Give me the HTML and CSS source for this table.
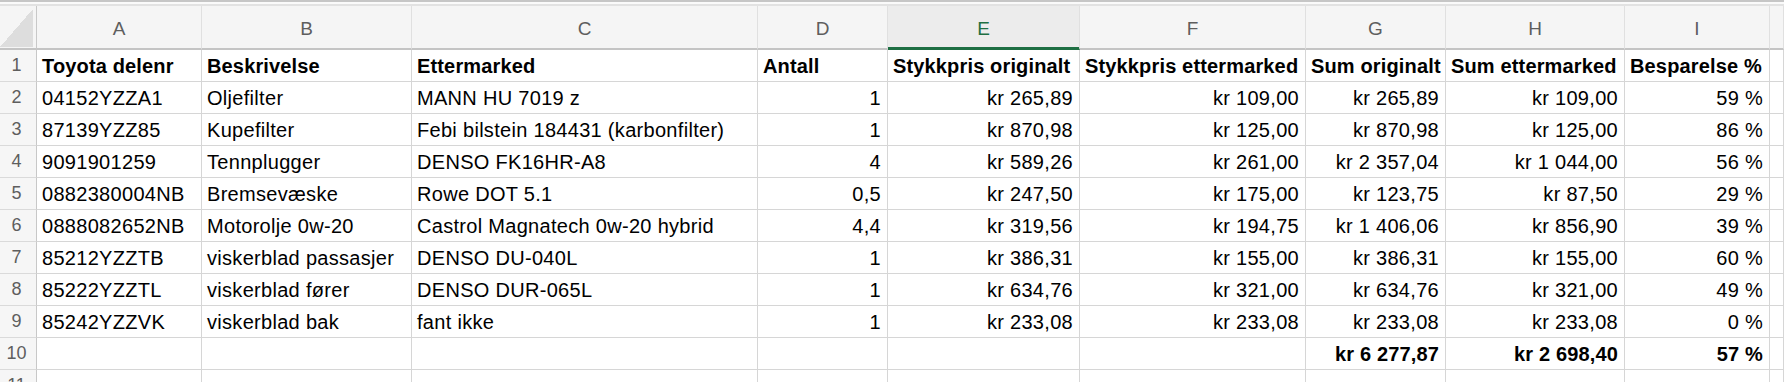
FILE: index.html
```html
<!DOCTYPE html>
<html lang="no">
<head>
<meta charset="utf-8">
<title>Regneark</title>
<link rel="stylesheet" href="styles.css">
</head>
<body>
<div class="topbar"></div>
<div class="sheet">
  <div class="row colhead">
    <div class="corner"><div class="tri"></div></div>
    <div class="ch">A</div><div class="ch">B</div><div class="ch">C</div><div class="ch">D</div>
    <div class="ch sel">E</div><div class="ch">F</div><div class="ch">G</div><div class="ch">H</div>
    <div class="ch">I</div><div class="ch"></div>
  </div>
  <div class="row">
    <div class="rn">1</div>
    <div class="c b">Toyota delenr</div><div class="c b">Beskrivelse</div><div class="c b">Ettermarked</div><div class="c b">Antall</div>
    <div class="c b">Stykkpris originalt</div><div class="c b">Stykkpris ettermarked</div><div class="c b">Sum originalt</div><div class="c b">Sum ettermarked</div><div class="c b">Besparelse %</div><div class="c"></div>
  </div>
  <div class="row">
    <div class="rn">2</div>
    <div class="c">04152YZZA1</div><div class="c">Oljefilter</div><div class="c">MANN HU 7019 z</div><div class="c r">1</div>
    <div class="c r">kr 265,89</div><div class="c r">kr 109,00</div><div class="c r">kr 265,89</div><div class="c r">kr 109,00</div><div class="c r">59 %</div><div class="c"></div>
  </div>
  <div class="row">
    <div class="rn">3</div>
    <div class="c">87139YZZ85</div><div class="c">Kupefilter</div><div class="c">Febi bilstein 184431 (karbonfilter)</div><div class="c r">1</div>
    <div class="c r">kr 870,98</div><div class="c r">kr 125,00</div><div class="c r">kr 870,98</div><div class="c r">kr 125,00</div><div class="c r">86 %</div><div class="c"></div>
  </div>
  <div class="row">
    <div class="rn">4</div>
    <div class="c">9091901259</div><div class="c">Tennplugger</div><div class="c">DENSO FK16HR-A8</div><div class="c r">4</div>
    <div class="c r">kr 589,26</div><div class="c r">kr 261,00</div><div class="c r">kr 2&nbsp;357,04</div><div class="c r">kr 1&nbsp;044,00</div><div class="c r">56 %</div><div class="c"></div>
  </div>
  <div class="row">
    <div class="rn">5</div>
    <div class="c">0882380004NB</div><div class="c">Bremsevæske</div><div class="c">Rowe DOT 5.1</div><div class="c r">0,5</div>
    <div class="c r">kr 247,50</div><div class="c r">kr 175,00</div><div class="c r">kr 123,75</div><div class="c r">kr 87,50</div><div class="c r">29 %</div><div class="c"></div>
  </div>
  <div class="row">
    <div class="rn">6</div>
    <div class="c">0888082652NB</div><div class="c">Motorolje 0w-20</div><div class="c">Castrol Magnatech 0w-20 hybrid</div><div class="c r">4,4</div>
    <div class="c r">kr 319,56</div><div class="c r">kr 194,75</div><div class="c r">kr 1&nbsp;406,06</div><div class="c r">kr 856,90</div><div class="c r">39 %</div><div class="c"></div>
  </div>
  <div class="row">
    <div class="rn">7</div>
    <div class="c">85212YZZTB</div><div class="c">viskerblad passasjer</div><div class="c">DENSO DU-040L</div><div class="c r">1</div>
    <div class="c r">kr 386,31</div><div class="c r">kr 155,00</div><div class="c r">kr 386,31</div><div class="c r">kr 155,00</div><div class="c r">60 %</div><div class="c"></div>
  </div>
  <div class="row">
    <div class="rn">8</div>
    <div class="c">85222YZZTL</div><div class="c">viskerblad fører</div><div class="c">DENSO DUR-065L</div><div class="c r">1</div>
    <div class="c r">kr 634,76</div><div class="c r">kr 321,00</div><div class="c r">kr 634,76</div><div class="c r">kr 321,00</div><div class="c r">49 %</div><div class="c"></div>
  </div>
  <div class="row">
    <div class="rn">9</div>
    <div class="c">85242YZZVK</div><div class="c">viskerblad bak</div><div class="c">fant ikke</div><div class="c r">1</div>
    <div class="c r">kr 233,08</div><div class="c r">kr 233,08</div><div class="c r">kr 233,08</div><div class="c r">kr 233,08</div><div class="c r">0 %</div><div class="c"></div>
  </div>
  <div class="row">
    <div class="rn">10</div>
    <div class="c"></div><div class="c"></div><div class="c"></div><div class="c"></div>
    <div class="c"></div><div class="c"></div><div class="c r b">kr 6&nbsp;277,87</div><div class="c r b">kr 2&nbsp;698,40</div><div class="c r b">57 %</div><div class="c"></div>
  </div>
  <div class="row">
    <div class="rn">11</div>
    <div class="c"></div><div class="c"></div><div class="c"></div><div class="c"></div>
    <div class="c"></div><div class="c"></div><div class="c"></div><div class="c"></div><div class="c"></div><div class="c"></div>
  </div>
</div>
</body>
</html>
```
FILE: styles.css
```css
html, body {
  margin: 0;
  padding: 0;
  background: #ffffff;
  overflow: hidden;
}
body {
  font-family: "Liberation Sans", Arial, sans-serif;
  color: #000;
}
.topbar {
  height: 2px;
  border-top: 2px solid #c6c6c6;
  border-bottom: 2px solid #e2e2e2;
  background: #fafafa;
}
.row {
  display: grid;
  grid-template-columns: 37px 165px 210px 346px 130px 192px 226px 140px 179px 145px 1fr;
  height: 32px;
}
.colhead {
  height: 44px;
  background: #f5f5f5;
}
.corner {
  box-sizing: border-box;
  border-right: 1px solid #c8c8c8;
  border-bottom: 2px solid #c4c4c4;
  display: flex;
  align-items: flex-end;
  padding-bottom: 1px;
}
.tri {
  width: 33px;
  height: 38px;
  background: linear-gradient(to bottom right, transparent 50%, #dddddd 50%);
}
.ch {
  box-sizing: border-box;
  border-right: 1px solid #e0e0e0;
  border-bottom: 2px solid #c4c4c4;
  text-align: center;
  font-size: 19px;
  line-height: 22px;
  padding-top: 12px;
  color: #5e5e5e;
}
.ch.sel {
  color: #1e6f43;
  background: #ececec;
  border-bottom-color: #1e6f43;
  box-shadow: inset 0 -1px 0 #1e6f43;
}
.rn {
  box-sizing: border-box;
  background: #f6f6f6;
  border-right: 1px solid #c8c8c8;
  border-bottom: 1px solid #dadada;
  text-align: center;
  font-size: 18px;
  line-height: 23px;
  padding: 4px 3px 0 0;
  color: #5e5e5e;
}
.c {
  box-sizing: border-box;
  border-right: 1px solid #d6d6d6;
  border-bottom: 1px solid #d6d6d6;
  font-size: 20px;
  line-height: 23px;
  letter-spacing: 0.3px;
  padding: 5px 5px 0 5px;
  white-space: nowrap;
}
.c.r {
  text-align: right;
  padding-right: 6px;
}
.c.b {
  font-weight: bold;
  letter-spacing: 0.15px;
}
```
